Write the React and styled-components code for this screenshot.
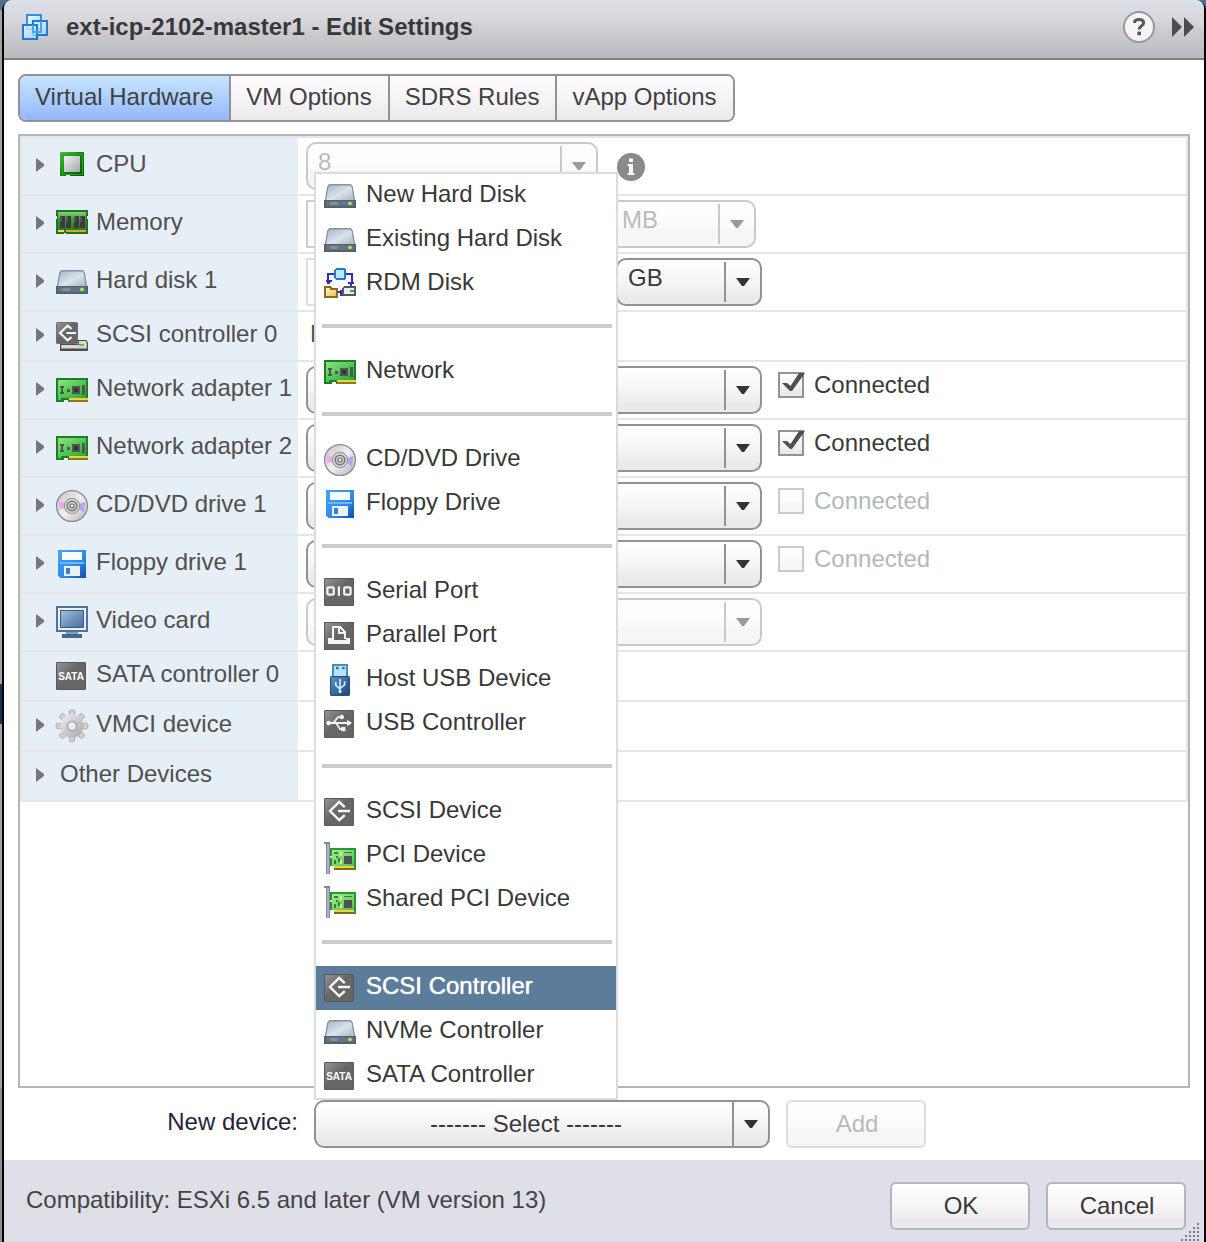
import React from "react";
import styled, { createGlobalStyle, css } from "styled-components";

const GlobalStyle = createGlobalStyle`
  *, *::before, *::after { box-sizing: border-box; }
  body {
    margin: 0;
    font-family: "Liberation Sans", Arial, sans-serif;
    font-size: 24px;
    line-height: 28px;
    color: #3a3a3a;
  }
  button, input, select { font: inherit; color: inherit; margin: 0; }
`;

/* ---------- window ---------- */

const Backdrop = styled.div`
  display: flex;
  min-height: 100vh;
  padding-left: 2px;
  background: linear-gradient(
    #4d6f91 0 10px,
    #a3a29e 10px 684px,
    #16305a 684px 724px,
    #a3a29e 724px 1088px,
    #8b8f93 1088px
  );
`;

const Dialog = styled.section`
  flex: 1;
  min-width: 0;
  display: flex;
  flex-direction: column;
  border: 0 solid #000;
  border-width: 0 2px;
  border-radius: 10px 10px 0 0;
  background: #fff;
`;

const TitleBar = styled.header`
  display: flex;
  align-items: center;
  gap: 16px;
  height: 60px;
  padding: 0 10px 4px 18px;
  border-bottom: 2px solid #808184;
  border-radius: 8px 8px 0 0;
  background: linear-gradient(#dae0e6, #d8d8de 30%, #cacacd 60%, #b8bac0);
`;

const Title = styled.h1`
  flex: 1;
  margin: 0;
  font-size: 24px;
  line-height: 28px;
  font-weight: bold;
  color: #383838;
`;

const IconButton = styled.button`
  display: flex;
  padding: 0;
  border: 0;
  background: none;
`;

const Main = styled.main`
  flex: 1;
  display: flex;
  flex-direction: column;
  gap: 12px;
  padding: 14px 14px 12px;
`;

const Tabs = styled.div`
  display: flex;
  align-self: flex-start;
  height: 48px;
  border: 2px solid #929292;
  border-radius: 8px;
  overflow: hidden;
`;

const Tab = styled.button`
  padding: 0 16px 2px 15px;
  border: 0;
  color: #404040;
  background: ${(p) =>
    p.$active
      ? "linear-gradient(#c6e4ff, #abd0ff 50%, #94b6fd)"
      : "linear-gradient(#fefcff, #f6f5f6 45%, #ece9ec)"};
  & + & { border-left: 2px solid #929292; }
`;

/* ---------- device list ---------- */

const Panel = styled.div`
  flex: 1;
  border: 2px solid #b1b7bb;
`;

const DeviceList = styled.ul`
  margin: 0;
  padding: 0;
  list-style: none;
  border: 2px solid #e6e6e6;
  border-bottom: 0;
`;

const DeviceRow = styled.li`
  display: grid;
  grid-template-columns: 276px 1fr;
  height: ${(p) => (p.$compact ? 50 : 58)}px;
  border-bottom: 2px solid #e6e6e6;
`;

const NameCell = styled.div`
  display: flex;
  align-items: center;
  padding-left: 14px;
  background: #e6eef6;
  white-space: nowrap;
`;

const Expander = styled.button`
  display: flex;
  width: 8px;
  margin-right: 12px;
  padding: 0;
  border: 0;
  background: none;
  visibility: ${(p) => (p.$hidden ? "hidden" : "visible")};
`;

const DeviceName = styled.span`
  padding: 0 0 4px ${(p) => (p.$icon ? 8 : 4)}px;
  color: #505050;
`;

const Controls = styled.div`
  display: flex;
  align-items: center;
  gap: 16px;
  padding-left: 8px;
`;

const PlainValue = styled.span`
  padding: 0 0 4px 4px;
  color: #505050;
`;

const TextBox = styled.input`
  width: ${(p) => p.$width}px;
  height: 48px;
  padding: 0 12px;
  border: 2px solid ${(p) => (p.disabled ? "#cdcdcd" : "#dedede")};
  background: #fff;
`;

const face = css`
  background: ${(p) =>
    p.$off
      ? "linear-gradient(#fffdff, #fdfaff 58%, #f6f6f6 60%)"
      : "linear-gradient(#fff, #f8f7f8 40%, #ece9ec 85%)"};
`;

const ComboFrame = styled.div`
  display: grid;
  width: ${(p) => p.$width}px;
  height: 48px;
  border: 2px solid ${(p) => (p.$off ? "#c9c9c9" : "#929292")};
  border-radius: 10px;
  ${face}
`;

const ComboSelect = styled.select`
  grid-area: 1 / 1;
  min-width: 0;
  appearance: none;
  border: 0;
  border-radius: 8px;
  background: none;
  outline: none;
  opacity: 1;
  padding: ${(p) => (p.$centered ? "0 32px 0 0" : "0 36px 9px 10px")};
  text-align: ${(p) => (p.$centered ? "center" : "left")};
  text-align-last: ${(p) => (p.$centered ? "center" : "left")};
  &:disabled { color: #b4bcbe; }
`;

const ComboArrow = styled.span`
  grid-area: 1 / 1;
  justify-self: end;
  display: flex;
  align-items: center;
  width: 36px;
  margin: ${(p) => (p.$full ? 0 : 2)}px 0;
  padding-left: 10px;
  border-left: 2px solid ${(p) => (p.$off ? "#c9c9c9" : "#929292")};
  pointer-events: none;
`;

const CheckLabel = styled.label`
  display: flex;
  align-items: center;
  gap: 10px;
  padding-bottom: 10px;
  color: ${(p) => (p.$off ? "#b0b8ba" : "#3a3a3a")};
`;

const CheckFrame = styled.span`
  display: grid;
  width: 26px;
  height: 26px;
  & > * { grid-area: 1 / 1; }
  svg { overflow: visible; pointer-events: none; }
`;

const CheckInput = styled.input`
  appearance: none;
  width: 26px;
  height: 26px;
  border: 2px solid ${(p) => (p.$off ? "#cbcbcb" : "#929292")};
  ${face}
`;

/* ---------- new device bar ---------- */

const NewDeviceBar = styled.div`
  display: flex;
  align-items: center;
  gap: 16px;
`;

const BarLabel = styled.label`
  width: 280px;
  padding-bottom: 4px;
  text-align: right;
  color: #24243a;
`;

const MenuAnchor = styled.div`
  position: relative;
`;

const Menu = styled.ul`
  position: absolute;
  left: 0;
  bottom: 100%;
  z-index: 1;
  width: 304px;
  margin: 0;
  padding: 0;
  list-style: none;
  border: 2px solid #d9dce0;
  background: #fff;
`;

const MenuItem = styled.button`
  display: flex;
  align-items: center;
  gap: 10px;
  width: 100%;
  height: 44px;
  padding: 0 8px;
  border: 0;
  text-align: left;
  white-space: nowrap;
  color: ${(p) => (p.$selected ? "#fff" : "#383838")};
  text-shadow: ${(p) => (p.$selected ? "0 0 1px #fff" : "none")};
  background: ${(p) => (p.$selected ? "#5b7d9b" : "none")};
`;

const MenuText = styled.span`
  padding-bottom: 4px;
`;

const Separator = styled.li`
  display: flex;
  align-items: center;
  height: 44px;
  padding: 0 4px 4px 6px;
  &::before {
    content: "";
    flex: 1;
    height: 4px;
    background: #cbcbcb;
  }
`;

const PushButton = styled.button`
  width: 140px;
  height: 48px;
  padding: 0 0 0 2px;
  border: 2px solid ${(p) => (p.$off ? "#dcdddf" : "#b1b7ba")};
  border-radius: 6px;
  color: ${(p) => (p.$off ? "#b4bcbe" : "#383838")};
  ${face}
`;

const Footer = styled.footer`
  position: relative;
  display: flex;
  align-items: center;
  gap: 16px;
  padding: 22px 18px 12px 22px;
  background: #dedfe7;
`;

const Compatibility = styled.p`
  flex: 1;
  margin: 0;
  padding-bottom: 12px;
  color: #444;
`;

const GripSvg = styled.svg`
  position: absolute;
  right: 4px;
  bottom: 0;
`;

/* ---------- icons, drawn on a 16-unit grid ---------- */

const IconSvg = styled.svg`
  flex: none;
  display: block;
  width: 32px;
  height: 32px;
  overflow: visible;
`;

const DefsSvg = styled.svg`
  position: absolute;
`;

const Glyph = ({ crisp = true, children }) => (
  <IconSvg viewBox="0 0 16 16" aria-hidden="true" shapeRendering={crisp ? "crispEdges" : "auto"}>
    {children}
  </IconSvg>
);

const Gradients = () => (
  <DefsSvg width="0" height="0" aria-hidden="true">
    <defs>
      <linearGradient id="gDark" x1="0" y1="0" x2="1" y2="1"><stop offset="0" stopColor="#949494" /><stop offset=".45" stopColor="#666" /><stop offset="1" stopColor="#666" /></linearGradient>
      <linearGradient id="gCpu" x1="0" y1="0" x2="1" y2="1"><stop offset="0" stopColor="#4cc13c" /><stop offset=".5" stopColor="#0c860c" /><stop offset="1" stopColor="#005000" /></linearGradient>
      <linearGradient id="gChip" x1="0" y1="0" x2="1" y2="1"><stop offset="0" stopColor="#f2f2f2" /><stop offset="1" stopColor="#a5a3a8" /></linearGradient>
      <linearGradient id="gBoard" x1="0" y1="0" x2="1" y2="1"><stop offset="0" stopColor="#8be67e" /><stop offset="1" stopColor="#2aa636" /></linearGradient>
      <linearGradient id="gPci" x1="0" y1="0" x2="1" y2="1"><stop offset="0" stopColor="#a4f092" /><stop offset="1" stopColor="#4fbe52" /></linearGradient>
      <linearGradient id="gMem" x1="0" y1="0" x2="0" y2="1"><stop offset="0" stopColor="#7fd873" /><stop offset=".4" stopColor="#3c9c36" /><stop offset="1" stopColor="#267a28" /></linearGradient>
      <linearGradient id="gDisk" x1="0" y1="0" x2="1" y2="1"><stop offset="0" stopColor="#a9b6c4" /><stop offset=".55" stopColor="#dbe3ec" /><stop offset="1" stopColor="#a9b5c4" /></linearGradient>
      <linearGradient id="gCd" x1="0" y1="0" x2="1" y2="1"><stop offset="0" stopColor="#c2c2c2" /><stop offset=".5" stopColor="#f1eff1" /><stop offset="1" stopColor="#b5b3b5" /></linearGradient>
      <linearGradient id="gFloppy" x1="0" y1="0" x2="1" y2="1"><stop offset="0" stopColor="#48a2f5" /><stop offset=".6" stopColor="#2e88ea" /><stop offset="1" stopColor="#0d4fa8" /></linearGradient>
      <linearGradient id="gScreen" x1="0" y1="0" x2="1" y2="1"><stop offset="0" stopColor="#9cc0de" /><stop offset="1" stopColor="#466f9c" /></linearGradient>
      <linearGradient id="gVm" x1="0" y1="0" x2="1" y2="1"><stop offset="0" stopColor="#f2fbff" /><stop offset="1" stopColor="#8fdcf8" /></linearGradient>
      <linearGradient id="gGear" x1="0" y1="0" x2="1" y2="1"><stop offset="0" stopColor="#f2f0f0" /><stop offset="1" stopColor="#a8a6a6" /></linearGradient>
      <linearGradient id="gUsb" x1="0" y1="0" x2="1" y2="1"><stop offset="0" stopColor="#5c94c6" /><stop offset="1" stopColor="#1b4576" /></linearGradient>
      <linearGradient id="gFolder" x1="0" y1="0" x2="1" y2="1"><stop offset="0" stopColor="#fff6c0" /><stop offset="1" stopColor="#f3c04e" /></linearGradient>
    </defs>
  </DefsSvg>
);

const Plate = () => (
  <>
    <rect x="0" y="1" width="15" height="14" rx=".6" fill="#585858" />
    <rect x=".5" y="1.5" width="14" height="13" fill="url(#gDark)" />
  </>
);

const icons = {
  cpu: (
    <Glyph>
      <path d="M2 1H14V13H7V12.5H5V13H2Z" fill="url(#gCpu)" />
      <path d="M3 2H13V12H3Z" fill="none" stroke="#2fa02a" strokeWidth=".5" />
      <rect x="4" y="3" width="8" height="8" fill="url(#gChip)" />
    </Glyph>
  ),
  memory: (
    <Glyph>
      <path d="M0 1H16V4H15.5V5.5H16V13H5V12.5H4V13H0V5.5H.5V4H0Z" fill="#1e7420" />
      <rect x="1" y="2" width="14" height="9" fill="url(#gMem)" />
      <path d="M2 4H4.5V10H2ZM5 4H7.5V10H5ZM9 4H11.5V10H9ZM12 4H14.5V10H12Z" fill="#3b3b3f" />
      <path d="M2 4H3V7H2ZM5 4H6V7H5ZM9 4H10V7H9ZM12 4H13V7H12Z" fill="#55555a" />
      <path d="M1 11H4V12H1ZM5 11H15V12H5Z" fill="#e3a323" />
      <rect x="1" y="11" width="3" height="1" fill="#ffd94a" />
    </Glyph>
  ),
  disk: (
    <Glyph crisp={false}>
      <path d="M2.6 2H13.4L14.4 3.2 15.6 10.2H.4L1.6 3.2Z" fill="#8492a1" />
      <path d="M3 2.7H13L13.8 3.6 14.9 10H1.1L2.2 3.6Z" fill="url(#gDisk)" />
      <rect x="0" y="10" width="16" height="4" fill="#566170" />
      <rect x="1" y="10.5" width="14" height="2.5" fill="#66727f" />
      <rect x="3" y="11" width="4" height="1.5" fill="#808d9a" />
      <rect x="12" y="11" width="2" height="1.5" fill="#6bd03c" />
      <rect x="12.4" y="11.2" width="1" height="1" fill="#ccf9a0" />
    </Glyph>
  ),
  scsiCtl: (
    <Glyph crisp={false}>
      <rect x="0" y="1" width="11" height="11" rx=".8" fill="#707070" />
      <rect x=".5" y="1.5" width="10" height="10" fill="url(#gDark)" />
      <path d="M7.8 4.4 5.8 2.8 2 6.5 5.8 10.2 7.8 8.6M5.2 6.5H10" fill="none" stroke="#f4f4f4" strokeWidth="1.1" />
      <path d="M11 10H15.2L16 11.5V15.5H2V12H11Z" fill="#4c4c4c" />
      <path d="M11.4 10.5H14.8L15.4 11.6V14.3H2.6V12.5H11.4Z" fill="#d9d7d9" />
      <rect x="11.5" y="12" width="2.5" height="1" fill="#48d818" />
    </Glyph>
  ),
  network: (
    <Glyph>
      <path d="M0 2H16V14H6V13H4V14H0Z" fill="#178028" />
      <path d="M1 3H15V12H1Z" fill="url(#gBoard)" />
      <path d="M1 12H2.5V13H1Z" fill="#56c556" />
      <path d="M2 6H4V7H2ZM2.5 7H3.5V10H2.5ZM2 9H4V10H2ZM5.5 7.5H7V9H5.5ZM8 6H12V10H8ZM13 5.5H14.5V10.5H13Z" fill="#4a5a50" />
      <rect x="9" y="7" width="2" height="2" fill="#303438" />
      <path d="M6.5 12H16V13H6.5Z" fill="#ecd53a" />
      <path d="M6.5 13H16V14H6.5Z" fill="#8b7a1c" />
    </Glyph>
  ),
  cd: (
    <Glyph crisp={false}>
      <circle cx="8" cy="8" r="7.7" fill="url(#gCd)" stroke="#8d8d8d" strokeWidth=".7" />
      <path d="M1.6 5.2 5 7V9L1.6 9.5Z" fill="#eda7ee" />
      <path d="M14.6 6 11 7.2V9L14 11.2Z" fill="#b9a4f2" />
      <circle cx="8" cy="8" r="3.8" fill="#dcdcdc" stroke="#9b9b9b" strokeWidth=".6" />
      <circle cx="8" cy="8" r="2.4" fill="#d0d0d0" stroke="#777" strokeWidth=".8" />
      <circle cx="8" cy="8" r="1" fill="#f2f2f2" stroke="#6c6c6c" strokeWidth=".6" />
    </Glyph>
  ),
  floppy: (
    <Glyph>
      <path d="M1 1H15V15H2L1 14Z" fill="url(#gFloppy)" />
      <rect x="3" y="2" width="10" height="4" fill="#f8fbff" />
      <rect x="2" y="7" width="12" height="1" fill="#6bb8fb" />
      <path d="M4 9H12V14H4Z" fill="#efeef0" />
      <rect x="5" y="10" width="2" height="3" fill="#2d82e2" />
    </Glyph>
  ),
  monitor: (
    <Glyph>
      <rect x="0" y="0" width="16" height="13" fill="#4d759c" />
      <rect x="1" y="1" width="14" height="11" fill="#e9eff5" />
      <rect x="2" y="2" width="12" height="9" fill="#365c84" />
      <rect x="2.5" y="2.5" width="11" height="8" fill="url(#gScreen)" />
      <rect x="5" y="13" width="6" height="1" fill="#7c9cba" />
      <rect x="3" y="14" width="10" height="2" fill="#45698c" />
    </Glyph>
  ),
  sata: (
    <Glyph crisp={false}>
      <Plate />
      <text x="7.5" y="10" textAnchor="middle" fontSize="5" fontWeight="bold" fill="#fff" fontFamily="Liberation Sans, Arial, sans-serif">SATA</text>
    </Glyph>
  ),
  gear: (
    <Glyph crisp={false}>
      {[0, 45, 90, 135, 180, 225, 270, 315].map((a) => (
        <rect key={a} x="6.7" y=".1" width="2.6" height="4" rx=".6" fill="#d2d0d0" stroke="#a5a3a3" strokeWidth=".4" transform={`rotate(${a} 8 8)`} />
      ))}
      <circle cx="8" cy="8" r="5.8" fill="url(#gGear)" />
      <circle cx="8" cy="8" r="2.3" fill="#e6eef6" stroke="#adabad" strokeWidth=".9" />
    </Glyph>
  ),
  rdm: (
    <Glyph>
      <path d="M5 3H2V8M11 3H14V8M7 12H10" fill="none" stroke="#3a2ac4" strokeWidth="1" />
      <path d="M1 6H4V7H3V8H2V7H1ZM12 7H15V8H14V9H13V8H12ZM8 11H9V14H8Z" fill="#3a2ac4" />
      <path d="M6 0H10L11 1V5L10 6H6L5 5V1Z" fill="#1c7cd4" />
      <rect x="6" y="1" width="4" height="4" fill="#bfe8fb" />
      <path d="M0 9H3L4 10H7V15H0Z" fill="#8a6a20" />
      <path d="M1 10H3V11H6V14H1Z" fill="url(#gFolder)" />
      <path d="M10 9H16V14H9V10Z" fill="#55575c" />
      <rect x="10" y="10" width="5" height="3" fill="#ececee" />
      <rect x="13" y="11" width="2" height="1" fill="#22b822" />
    </Glyph>
  ),
  serial: (
    <Glyph crisp={false}>
      <Plate />
      <rect x="1.7" y="5.7" width="3.2" height="3.6" rx=".5" fill="none" stroke="#f4f4f4" strokeWidth="1.1" />
      <rect x="6.9" y="5.1" width="1.1" height="4.8" fill="#f4f4f4" />
      <rect x="10.1" y="5.7" width="3.2" height="3.6" rx=".5" fill="none" stroke="#f4f4f4" strokeWidth="1.1" />
    </Glyph>
  ),
  parallel: (
    <Glyph>
      <Plate />
      <path d="M2 9H5V10H11V9H13V12H2Z" fill="#f4f4f4" />
      <path d="M4.5 9.5V3.5H8L10.5 6V9.5M7.5 3.5V6.5H10.5" fill="none" stroke="#f4f4f4" strokeWidth="1" />
    </Glyph>
  ),
  usbStick: (
    <Glyph crisp={false}>
      <rect x="4" y="0" width="8" height="6.5" fill="#4a8dbd" />
      <rect x="5" y="1" width="6" height="5.5" fill="#b5e3f8" />
      <path d="M6 1.5H7.3V2.6H6ZM9 1.5H10.3V2.6H9Z" fill="#346e9e" />
      <rect x="3" y="6" width="10" height="10" rx=".8" fill="#24507f" />
      <rect x="3.6" y="6.6" width="8.8" height="8.8" fill="url(#gUsb)" />
      <path d="M8 7.5V14.5M5.9 9V10.6L8 12.6M10.3 8.6V10.4L8 12.2" fill="none" stroke="#d6ecfb" strokeWidth=".8" />
      <circle cx="8" cy="13.8" r=".8" fill="#d6ecfb" />
    </Glyph>
  ),
  usbCtl: (
    <Glyph crisp={false}>
      <Plate />
      <path d="M2 7.5H13M4.6 7.5 7 4.6H8.6M6 7.5 8 10.6H9.6" fill="none" stroke="#f4f4f4" strokeWidth=".9" />
      <circle cx="2.3" cy="7.5" r="1.1" fill="#f4f4f4" />
      <circle cx="8.9" cy="4.5" r="1.1" fill="#f4f4f4" />
      <rect x="8.6" y="9.5" width="2.1" height="2.1" fill="#f4f4f4" />
      <path d="M11.6 5.9 14 7.5 11.6 9.1Z" fill="#f4f4f4" />
    </Glyph>
  ),
  scsi: (
    <Glyph crisp={false}>
      <Plate />
      <path d="M10.4 5.6 7.6 3 3 7.5 7.6 12 10.4 9.6M7 7.5H13" fill="none" stroke="#f8f8f8" strokeWidth="1.2" />
    </Glyph>
  ),
  pci: (
    <Glyph>
      <path d="M0 1H3V17H1V2H0Z" fill="#7f879f" />
      <rect x="1.5" y="2" width="1" height="15" fill="#a9b2c8" />
      <path d="M3 4H16V15H5V13H3Z" fill="#259a32" />
      <path d="M4 5H15V13H4Z" fill="url(#gPci)" />
      <path d="M5 6H7V7H5ZM5 10H6V12H5ZM6 8H7V9H6ZM7 9H8V11H7ZM3 5H4V6H3ZM3 10H4V12H3ZM10 6H14V6.5H10Z" fill="#3b7a40" />
      <path d="M8 6H9V8H8ZM8 10H9V12H8ZM3 8H4V9H3Z" fill="#e4e879" />
      <rect x="10" y="8" width="4" height="4" fill="#4c5450" />
      <path d="M5 13H15V14H5Z" fill="#f0d336" />
      <path d="M5 14H15V15H5Z" fill="#75701c" />
    </Glyph>
  ),
};

const VmIcon = () => (
  <svg width="28" height="28" viewBox="0 0 28 28" aria-hidden="true">
    <rect x="5" y="2" width="14" height="14" fill="url(#gVm)" stroke="#2f8fee" strokeWidth="2" />
    <rect x="11" y="8" width="14" height="14" fill="url(#gVm)" fillOpacity=".75" stroke="#2377d8" strokeWidth="2" />
    <rect x="1" y="12" width="14" height="14" fill="url(#gVm)" fillOpacity=".75" stroke="#2377d8" strokeWidth="2" />
    <path d="M11 12V19H19V8" fill="none" stroke="#49a4ee" strokeWidth="2" />
  </svg>
);

const HelpIcon = () => (
  <svg width="34" height="34" viewBox="0 0 34 34" aria-hidden="true">
    <circle cx="17" cy="17" r="15" fill="#f6f4f7" stroke="#989898" strokeWidth="2" />
    <path d="M12.5 13C12.5 10.5 14.5 9.6 17 9.6C20 9.6 21.6 11 21.6 13C21.6 15.8 17.2 15.8 17.2 19.6" fill="none" stroke="#585858" strokeWidth="3" />
    <rect x="15.4" y="21.6" width="3.6" height="3.6" fill="#585858" />
  </svg>
);

const FastForwardIcon = () => (
  <svg width="22" height="20" viewBox="0 0 22 20" aria-hidden="true">
    <path d="M0 0 10 10 0 20ZM12 0 22 10 12 20Z" fill="#4c4c4c" />
  </svg>
);

const InfoIcon = () => (
  <svg width="34" height="34" viewBox="0 0 34 34" role="img" aria-label="Information">
    <circle cx="17" cy="18" r="14" fill="#8b898b" />
    <path d="M15 9.6H19V13H15ZM13.6 15H19V24H20.4V26H13.6V24H15V17H13.6Z" fill="#fff" />
  </svg>
);

const Grip = () => (
  <GripSvg width="20" height="20" viewBox="0 0 20 20" aria-hidden="true">
    {[0, 1, 2, 3, 4].flatMap((row) =>
      Array.from({ length: row + 1 }, (_, i) => (
        <rect key={`${row}-${i}`} x={17 - i * 4} y={row * 4 + 1} width="2" height="2" fill="#7c7d84" />
      ))
    )}
  </GripSvg>
);

/* ---------- controls ---------- */

function Combo({ id, label, value = "", width, disabled, centered }) {
  return (
    <ComboFrame $width={width} $off={disabled}>
      <ComboSelect id={id} aria-label={label} disabled={disabled} $centered={centered} defaultValue={value}>
        <option value={value}>{value}</option>
      </ComboSelect>
      <ComboArrow $off={disabled} $full={centered}>
        <svg width="14" height="8" viewBox="0 0 14 8" aria-hidden="true">
          <path d="M0 0H14L8 8H6Z" fill={disabled ? "#9a9a9a" : "#333"} />
        </svg>
      </ComboArrow>
    </ComboFrame>
  );
}

function Connected({ checked, disabled }) {
  return (
    <CheckLabel $off={disabled}>
      <CheckFrame>
        <CheckInput type="checkbox" defaultChecked={checked} disabled={disabled} $off={disabled} />
        {checked && (
          <svg width="26" height="26" viewBox="0 0 26 26" aria-hidden="true">
            <path d="M4 11H9L12.5 14 21 1H27L14 19H12Z" fill="#505050" />
          </svg>
        )}
      </CheckFrame>
      Connected
    </CheckLabel>
  );
}

const devices = [
  { name: "CPU", icon: "cpu", controls: <><Combo label="CPU" value="8" width={292} disabled /><InfoIcon /></> },
  { name: "Memory", icon: "memory", controls: <><TextBox aria-label="Memory size" $width={288} disabled /><Combo label="Memory unit" value="MB" width={146} disabled /></> },
  { name: "Hard disk 1", icon: "disk", controls: <><TextBox aria-label="Disk size" $width={294} /><Combo label="Disk unit" value="GB" width={146} /></> },
  { name: "SCSI controller 0", icon: "scsiCtl", compact: true, controls: <PlainValue>LSI Logic</PlainValue> },
  { name: "Network adapter 1", icon: "network", controls: <><Combo label="Network adapter 1" width={456} /><Connected checked /></> },
  { name: "Network adapter 2", icon: "network", controls: <><Combo label="Network adapter 2" width={456} /><Connected checked /></> },
  { name: "CD/DVD drive 1", icon: "cd", controls: <><Combo label="CD/DVD drive 1" width={456} /><Connected disabled /></> },
  { name: "Floppy drive 1", icon: "floppy", controls: <><Combo label="Floppy drive 1" width={456} /><Connected disabled /></> },
  { name: "Video card", icon: "monitor", controls: <Combo label="Video card" width={456} disabled /> },
  { name: "SATA controller 0", icon: "sata", compact: true, fixed: true },
  { name: "VMCI device", icon: "gear", compact: true },
  { name: "Other Devices", compact: true },
];

const menuGroups = [
  [["New Hard Disk", "disk"], ["Existing Hard Disk", "disk"], ["RDM Disk", "rdm"]],
  [["Network", "network"]],
  [["CD/DVD Drive", "cd"], ["Floppy Drive", "floppy"]],
  [["Serial Port", "serial"], ["Parallel Port", "parallel"], ["Host USB Device", "usbStick"], ["USB Controller", "usbCtl"]],
  [["SCSI Device", "scsi"], ["PCI Device", "pci"], ["Shared PCI Device", "pci"]],
  [["SCSI Controller", "scsi"], ["NVMe Controller", "disk"], ["SATA Controller", "sata"]],
];

const tabs = ["Virtual Hardware", "VM Options", "SDRS Rules", "vApp Options"];

export default function App() {
  return (
    <>
      <GlobalStyle />
      <Gradients />
      <Backdrop>
        <Dialog>
          <TitleBar>
            <VmIcon />
            <Title>ext-icp-2102-master1 - Edit Settings</Title>
            <IconButton aria-label="Help"><HelpIcon /></IconButton>
            <IconButton aria-label="Expand"><FastForwardIcon /></IconButton>
          </TitleBar>
          <Main>
            <Tabs role="tablist">
              {tabs.map((t, i) => (
                <Tab key={t} role="tab" aria-selected={i === 0} $active={i === 0}>{t}</Tab>
              ))}
            </Tabs>
            <Panel>
              <DeviceList>
                {devices.map((d) => (
                  <DeviceRow key={d.name} $compact={d.compact}>
                    <NameCell>
                      <Expander aria-label={`Expand ${d.name}`} $hidden={d.fixed}>
                        <svg width="8" height="16" viewBox="0 0 8 16" aria-hidden="true">
                          <path d="M0 0 8 6V8L0 14Z" fill="#767676" />
                        </svg>
                      </Expander>
                      {d.icon && icons[d.icon]}
                      <DeviceName $icon={d.icon}>{d.name}</DeviceName>
                    </NameCell>
                    <Controls>{d.controls}</Controls>
                  </DeviceRow>
                ))}
              </DeviceList>
            </Panel>
            <NewDeviceBar>
              <BarLabel htmlFor="new-device">New device:</BarLabel>
              <MenuAnchor>
                <Combo id="new-device" value="------- Select -------" width={456} centered />
                <Menu>
                  {menuGroups.map((group, g) => (
                    <React.Fragment key={g}>
                      {g > 0 && <Separator role="separator" />}
                      {group.map(([text, icon]) => (
                        <li key={text}>
                          <MenuItem $selected={text === "SCSI Controller"}>
                            {icons[icon]}
                            <MenuText>{text}</MenuText>
                          </MenuItem>
                        </li>
                      ))}
                    </React.Fragment>
                  ))}
                </Menu>
              </MenuAnchor>
              <PushButton disabled $off>Add</PushButton>
            </NewDeviceBar>
          </Main>
          <Footer>
            <Compatibility>Compatibility: ESXi 6.5 and later (VM version 13)</Compatibility>
            <PushButton>OK</PushButton>
            <PushButton>Cancel</PushButton>
            <Grip />
          </Footer>
        </Dialog>
      </Backdrop>
    </>
  );
}
